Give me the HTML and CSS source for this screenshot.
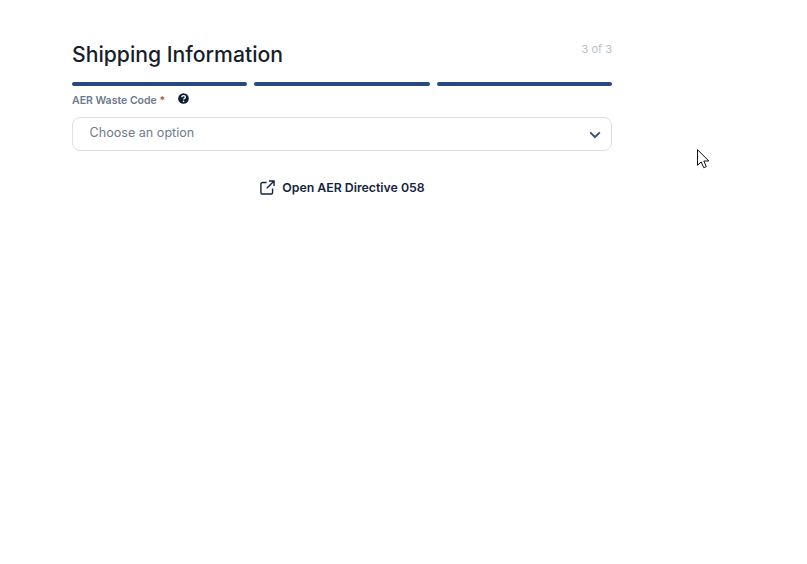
FILE: index.html
```html
<!DOCTYPE html>
<html lang="en">
<head>
<meta charset="utf-8">
<title>Shipping Information</title>
<link rel="stylesheet" href="styles.css">
</head>
<body>
<main class="form">
  <header class="head">
    <h1 class="title">Shipping Information</h1>
    <span class="step">3 of 3</span>
  </header>
  <div class="progress">
    <span class="bar"></span><span class="bar"></span><span class="bar"></span>
  </div>
  <div class="label-row">
    <label class="label">AER Waste Code <span class="req">*</span></label>
    <svg class="help" viewBox="0 0 12 12" width="11" height="11"><circle cx="6" cy="6" r="5.8" fill="#111c33"/><path d="M4.1 4.7c0-1.1.9-1.8 2-1.8s1.9.7 1.9 1.7c0 1.4-1.9 1.3-1.9 2.5" fill="none" stroke="#fff" stroke-width="1.5"/><circle cx="6.1" cy="9.1" r=".9" fill="#fff"/></svg>
  </div>
  <div class="select">
    <span class="placeholder">Choose an option</span>
    <svg class="chev" viewBox="0 0 12 8" width="12" height="8"><path d="M1.2 1.4 6 6l4.8-4.6" fill="none" stroke="#3d5478" stroke-width="2"/></svg>
  </div>
  <a class="link">
    <svg class="ext" viewBox="0 0 16 16" width="15" height="15"><path d="M7 2.6H3a2 2 0 0 0-2 2V13a2 2 0 0 0 2 2h8.4a2 2 0 0 0 2-2V9M9.6 1h5.4v5.4M15 1 7.2 8.8" fill="none" stroke="#14233f" stroke-width="1.5"/></svg>
    <span>Open AER Directive 058</span>
  </a>
</main>
<svg class="cursor" viewBox="0 0 13 20" width="13" height="20"><path d="M.5.7v15.6l3.7-3.4 2.5 5.8 2.6-1.1-2.5-5.6h5z" fill="#fff" stroke="#111" stroke-width="1"/></svg>
</body>
</html>
```
FILE: styles.css
```css
html, body { margin: 0; height: 100%; background: #fff; overflow: hidden; }
body { font-family: Inter, "Liberation Sans", sans-serif; position: relative; }
.form { width: 540px; margin-left: 72px; padding-top: 41px; display: flex; flex-direction: column; }
.head { display: flex; justify-content: space-between; align-items: flex-start; height: 41px; }
.title { margin: 0; font-size: 21.2px; line-height: 27px; font-weight: 500; color: #161e2e; }
.step { font-size: 11px; line-height: 17px; color: #b4bfc9; }
.progress { display: flex; gap: 7px; height: 4px; }
.bar { flex: 1; background: #264a7f; border-radius: 2px; }
.label-row { display: flex; align-items: center; gap: 13px; height: 22px; margin-top: 3px; margin-bottom: 6px; }
.label { font-size: 10.5px; font-weight: 600; color: #6b7a8c; }
.req { color: #a8603a; }
.help { margin-top: -3px; }
.select { box-sizing: border-box; height: 34px; border: 1px solid #dcdfe4; border-radius: 8px; display: flex; align-items: center; justify-content: space-between; padding: 0 10px 0 16.5px; }
.placeholder { font-size: 12.6px; line-height: 16px; color: #6f7b8c; margin-top: -2px; }
.chev { margin-top: 1px; }
.link { display: flex; align-items: center; justify-content: center; gap: 7px; margin-top: 29px; padding-left: 1px; font-size: 12.3px; font-weight: 600; color: #14233f; }
.cursor { position: absolute; left: 697px; top: 149px; }
```
